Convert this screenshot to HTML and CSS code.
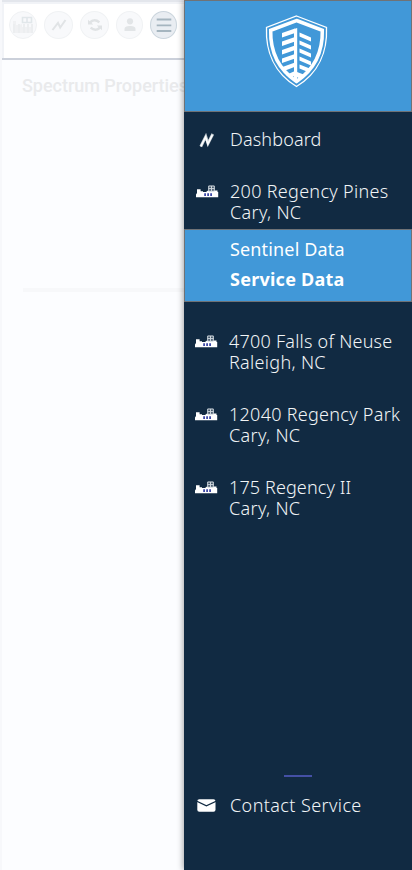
FILE: index.html
```
<!DOCTYPE html>
<html lang="en">
<head>
<meta charset="utf-8">
<title>Spectrum Properties</title>
<link rel="stylesheet" href="styles.css">
</head>
<body>
<svg class="defs" aria-hidden="true">
  <symbol id="building" viewBox="0 0 23 13">
    <path d="M1 4.2H4.6V6.2H7V7H10L12 5.6H21.5V7H22.2V12.2H0V9.5L1 8Z" fill="#fff"/>
    <path d="M12.4 .6H18.6V6H12.4Z" fill="#42566a"/>
    <path d="M12.7 1H18.3V6.2H12.7ZM12.5 3.6H18.5M15.5 1V6.2" fill="none" stroke="#cdd5db" stroke-width="1"/>
    <path d="M8.2 8.2H10V11H8.2ZM11.2 8.2H13V11H11.2ZM14.2 8.2H16V11H14.2Z" fill="#3c48a6"/>
  </symbol>
</svg>
<div class="screen">
  <main class="page">
    <nav class="toolbar">
      <span class="round"><svg width="22" height="18" viewBox="0 0 22 18"><path d="M1 5H4V9H7L10 8V11H21V17H1Z" fill="#f0f1f3"/><path d="M10.5 1.5H19.5V6.5H10.5ZM15 1.5V6.5" fill="none" stroke="#e1e7ea" stroke-width="1.6"/><path d="M2 8V17M7 8V17M12 8V17M16 8V17M20 8V17" stroke="#eceef0" stroke-width="2"/></svg></span>
      <span class="round bolt"><svg width="16" height="14" viewBox="0 0 16 14"><path d="M1.5 12L7 4.8L9.2 9.5L14.5 2" fill="none" stroke="#e1e4e6" stroke-width="2"/></svg></span>
      <span class="round sync"><svg width="16" height="14" viewBox="0 0 18 16"><path d="M3 6C5 2 10 1.5 14 5M15 10C13 14 8 14.5 4 11" fill="none" stroke="#e0e3e5" stroke-width="2.8"/><path d="M1 2V7.5H7ZM17 14V8.5H11Z" fill="#e0e3e5"/></svg></span>
      <span class="round user"><svg width="14" height="14" viewBox="0 0 14 14"><circle cx="7" cy="3.3" r="3.1" fill="#e2e5e7"/><path d="M1.5 13V11C1.5 8.8 4 8 7 8S12.5 8.8 12.5 11V13Z" fill="#e2e5e7"/></svg></span>
      <span class="round menu"><svg width="16" height="14" viewBox="0 0 16 14"><path d="M.7 1.5H15.3M.7 7.3H15.3M.7 13H15.3" stroke="#a5b5bf" stroke-width="1.8"/></svg></span>
    </nav>
    <h1 class="title">Spectrum Properties</h1>
    <div class="rule"></div>
  </main>
  <aside class="drawer">
    <header class="brand">
      <svg width="63" height="73" viewBox="0 0 63 73">
        <path d="M31.5 1L61.5 12.5C62.5 36 54 58 31.5 71.5C9 58 .5 36 1.5 12.5Z" fill="none" stroke="#fff" stroke-width="1.3"/>
        <path d="M31.5 5.5L57.3 15.3C57.8 36 50 54 31.5 66.5C13 54 5.2 36 5.7 15.3Z" fill="none" stroke="#fff" stroke-width="3.5"/>
        <path d="M29 14L32.2 13V66L29 64Z" fill="#fff"/>
        <path d="M17 18L30 13.5V18L17 22.5ZM17 26.5L30 22V26.5L17 31ZM17 35L30 30.5V35L17 39.5ZM17 43.5L30 39V43.5L17 48ZM16 52.5L30 47.5V51.8L19 56ZM21 60L30 56V60.5L26 63Z" fill="#fff"/>
        <path d="M34.5 17.5L46 22.5V26.5L34.5 21.5ZM34.5 25.5L46 30.5V34.5L34.5 29.5ZM34.5 33.5L46 38.5V42.5L34.5 37.5ZM34.5 41.5L46 46.5V50.5L34.5 45.5ZM34.5 49.5L46 54L43 57L34.5 53.5ZM32 57L40 60L35 64L32 62Z" fill="#fff"/>
      </svg>
    </header>
    <a class="item dash"><svg class="icon" width="16" height="15" viewBox="0 0 16 15"><path d="M1.8 13.5L6.8 3.5L9 10.5L13.8 1" fill="none" stroke="#c7cfd5" stroke-width="2.8"/><path d="M1.8 13.5L6.6 4L8.8 11L13.3 2" fill="none" stroke="#fff" stroke-width="1.5"/></svg><span class="t1">Dashboard</span></a>
    <a class="item pines"><svg class="icon" width="23" height="13"><use href="#building"/></svg><span><b class="t2">200 Regency Pines</b><b class="cary">Cary, NC</b></span></a>
    <div class="sub"><span class="t3">Sentinel Data</span><strong class="t4">Service Data</strong></div>
    <a class="item place falls"><svg class="icon" width="23" height="13"><use href="#building"/></svg><span><b class="t5">4700 Falls of Neuse</b><b class="t6">Raleigh, NC</b></span></a>
    <a class="item place"><svg class="icon" width="23" height="13"><use href="#building"/></svg><span><b class="t7">12040 Regency Park</b><b class="cary">Cary, NC</b></span></a>
    <a class="item place"><svg class="icon" width="23" height="13"><use href="#building"/></svg><span><b class="t8">175 Regency II</b><b class="cary">Cary, NC</b></span></a>
    <footer class="foot">
      <div class="dash-line"></div>
      <a class="item contact"><svg class="icon" width="19" height="14" viewBox="0 0 19 14"><rect x=".3" y=".2" width="18.2" height="12.6" rx="2" fill="#fff"/><path d="M0 2.3L9.4 6.8L19 2.3" fill="none" stroke="#112a42" stroke-width="1.2"/></svg><span class="t9">Contact Service</span></a>
    </footer>
  </aside>
</div>
</body>
</html>
```
FILE: styles.css
```
* { box-sizing: border-box; }
body { margin: 0; }
.defs { display: none; }
.screen {
  display: flex;
  width: 412px;
  height: 870px;
  overflow: hidden;
  background: #fcfdff;
}
.page {
  width: 184px;
  flex: none;
  overflow: hidden;
  border-left: 2px solid #f7f8fb;
  white-space: nowrap;
}
.toolbar {
  display: flex;
  height: 60px;
  margin-left: -2px;
  padding: 9px 0 0 7px;
  background: #fff;
  border-top: 2px solid #e3e6ec;
  border-left: 2px solid #e3e6ec;
  border-bottom: 2px solid #cbd0da;
  box-shadow: inset 2px 2px #f1f3f7;
}
.round {
  display: flex;
  flex: none;
  align-items: center;
  justify-content: center;
  width: 28px;
  height: 28px;
  border: 1px solid #f0f2f4;
  border-radius: 50%;
  background: #f8f9fb;
}
.bolt { margin-left: 7px; width: 29px; }
.sync { margin-left: 7px; width: 29px; }
.user { margin-left: 7px; width: 27px; }
.menu { margin-left: 7px; width: 27px; background: #e9edf2; border-color: #cbd5dd; }
.title {
  margin: 15px 0 0 20px;
  font: 500 18px/22px Roboto, sans-serif;
  letter-spacing: -.03px;
  color: #e9eaec;
}
.rule { height: 4px; margin: 191px 0 0 21px; background: #f7f8fa; }
.drawer {
  display: flex;
  flex-direction: column;
  width: 228px;
  position: relative;
  background: #112a42;
  box-shadow: -1px 0 6px rgba(0, 0, 0, .35);
  color: #f2f5f7;
  font: 300 18px/21px "Noto Sans", sans-serif;
  white-space: nowrap;
}
.brand {
  height: 112px;
  padding: 14px 0 0 80px;
  background: #4198d8;
  border: 1px solid #6f7276;
}
.brand svg { display: block; }
.item { display: grid; grid-template-columns: 46px 1fr; align-items: start; }
.item b { display: block; font-weight: 300; }
.icon { margin: 4px 0 0 12px; }
.dash { margin-top: 17px; height: 21px; }
.dash .icon { margin-left: 15px; }
.pines { margin-top: 31px; height: 48px; }
.sub {
  display: flex;
  flex-direction: column;
  height: 73px;
  padding: 4px 0 0 45px;
  background: #4198d8;
  border: 1px solid #6f7276;
  line-height: 30px;
}
.sub strong { font-weight: 700; }
.place { grid-template-columns: 45px 1fr; height: 42px; margin-top: 31px; }
.place .icon { margin-left: 11px; }
.falls { margin-top: 29px; }
.foot { margin-top: auto; height: 95px; }
.dash-line { width: 28px; height: 2px; margin-left: 100px; background: #4450a5; }
.contact { margin-top: 18px; }
.contact .icon { margin-left: 13px; }
.t1 { letter-spacing: .15px; }
.t2 { letter-spacing: .3px; }
.t3 { letter-spacing: .15px; font-weight: 400; color: #fff; }
.t4 { letter-spacing: .25px; color: #fff; }
.t5 { letter-spacing: .23px; }
.t6 { letter-spacing: .32px; }
.t7 { letter-spacing: .28px; }
.t8 { letter-spacing: .12px; }
.t9 { letter-spacing: .4px; }
.cary { letter-spacing: .33px; }
```
